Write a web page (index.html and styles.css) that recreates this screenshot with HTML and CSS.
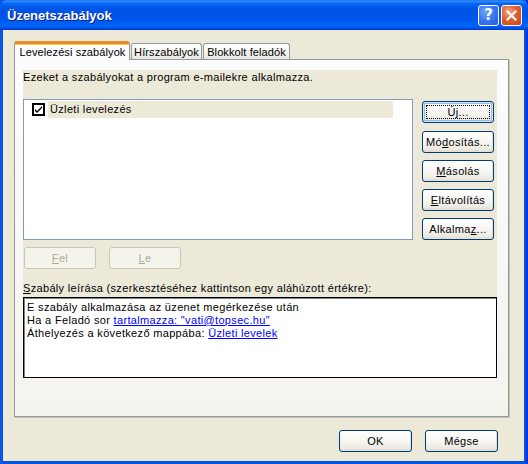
FILE: index.html
```html
<!DOCTYPE html>
<html lang="hu">
<head>
<meta charset="utf-8">
<title>Üzenetszabályok</title>
<link rel="stylesheet" href="styles.css">
</head>
<body>
<div class="window">
  <div class="titlebar">
    <span class="title">Üzenetszabályok</span>
    <div class="caption-btns">
      <span class="cbtn help">?</span>
      <span class="cbtn close"><svg width="11" height="11" viewBox="0 0 11 11"><path d="M1.5 1.5 L9.5 9.5 M9.5 1.5 L1.5 9.5" stroke="#fff" stroke-width="2.2" stroke-linecap="square"/></svg></span>
    </div>
  </div>
  <div class="client">
    <div class="tabs">
      <div class="tab active">Levelezési szabályok</div>
      <div class="tab t2">Hírszabályok</div>
      <div class="tab t3">Blokkolt feladók</div>
    </div>
    <div class="panel">
      <div class="page">
        <div class="intro">Ezeket a szabályokat a program e-mailekre alkalmazza.</div>
        <div class="rules-row">
          <div class="listbox">
            <div class="item">
              <svg class="chk" width="13" height="13" viewBox="0 0 13 13"><rect x="0.5" y="0.5" width="12" height="12" fill="#fff" stroke="#000"/><rect x="1.5" y="1.5" width="10" height="10" fill="none" stroke="#000"/><path d="M3 6 L5 8 L10 3 L10 5 L5 10 L3 8 Z" fill="#000"/></svg>
              <span class="item-label">Üzleti levelezés</span>
            </div>
          </div>
          <div class="side-btns">
            <button class="btn default">Új...</button>
            <button class="btn first">Mó<u>d</u>osítás...</button>
            <button class="btn"><u>M</u>ásolás</button>
            <button class="btn"><u>E</u>ltávolítás</button>
            <button class="btn">Alkalma<u>z</u>...</button>
          </div>
        </div>
        <div class="move-row">
          <button class="btn disabled"><u>F</u>el</button>
          <button class="btn disabled"><u>L</u>e</button>
        </div>
        <div class="desc-label"><u>S</u>zabály leírása (szerkesztéséhez kattintson egy aláhúzott értékre):</div>
        <div class="desc">
          <div>E szabály alkalmazása az üzenet megérkezése után</div>
          <div>Ha a Feladó sor <a class="link">tartalmazza: "vati@topsec.hu"</a></div>
          <div>Áthelyezés a következő mappába: <a class="link">Üzleti levelek</a></div>
        </div>
      </div>
    </div>
    <div class="footer">
      <button class="btn">OK</button>
      <button class="btn">Mégse</button>
    </div>
  </div>
</div>
</body>
</html>
```

FILE: styles.css
```css
* { box-sizing: border-box; }
html, body { margin: 0; padding: 0; background: #fff; }
body { font-family: "Liberation Sans", Arial, sans-serif; font-size: 11px; color: #000; letter-spacing: 0.33px; }

.window {
  width: 528px;
  height: 464px;
  display: flex;
  flex-direction: column;
  background: linear-gradient(to right, #0831D9 0, #166AEE 1px, #0055E5 2px, #0055E5 525px, #0831D9 527px);
}

.titlebar {
  height: 30px;
  display: flex;
  align-items: center;
  justify-content: space-between;
  padding: 0 6px 0 7px;
  background: linear-gradient(to bottom, #0A5FF5 0, #3D95FF 1px, #0A6AF7 3px, #0055E8 8px, #0052E6 14px, #0058EE 20px, #0063F8 25px, #0060F6 27px, #0043D5 29px, #0036C2 30px);
  border-radius: 7px 7px 0 0;
}
.title {
  color: #fff;
  font-weight: bold;
  font-size: 13px;
  letter-spacing: 0;
  text-shadow: 1px 1px 0 #0A1E8A;
  margin-top: 1px;
}
.caption-btns { display: flex; gap: 2px; margin-top: 1px; }
.cbtn {
  width: 21px;
  height: 21px;
  border: 1px solid #fff;
  border-radius: 3px;
  display: flex;
  align-items: center;
  justify-content: center;
  color: #fff;
  letter-spacing: 0;
}
.help {
  background: radial-gradient(circle at 35% 30%, #6FA4FF 0, #3B7BF2 45%, #2458DC 100%);
  font-family: "DejaVu Sans", sans-serif;
  font-weight: bold;
  font-size: 15px;
  line-height: 1;
}
.close {
  background: radial-gradient(circle at 35% 30%, #F0A58A 0, #E2602F 45%, #C4411A 100%);
}

.client {
  flex: 1;
  margin: 0 4px 3px 3px;
  background: #ECE9D8;
  padding: 11px 0 0 11px;
  display: flex;
  flex-direction: column;
}

.tabs {
  display: flex;
  align-items: flex-end;
  height: 18px;
  position: relative;
  z-index: 1;
}
.tab {
  height: 16px;
  border: 1px solid #919B9C;
  border-bottom: none;
  border-radius: 3px 3px 0 0;
  background: linear-gradient(#FFFFFF, #F3F3EF 60%, #E9E8E1);
  display: flex;
  align-items: center;
  justify-content: center;
  padding-top: 1px;
  white-space: nowrap;
  letter-spacing: 0.1px;
}
.tab.active {
  width: 116px;
  height: 19px;
  margin-bottom: -1px;
  background: #FCFCFE;
  border-top: 3px solid #E68B2C;
  box-shadow: inset 0 1px 0 #FFC73C;
  padding-top: 0;
  padding-left: 1px;
}
.t2 { width: 71px; margin-left: 1px; }
.t3 { width: 87px; margin-left: 1px; }

.panel {
  width: 495px;
  height: 358px;
  border: 1px solid #919B9C;
  box-shadow: 1px 1px 0 #C4C2B4;
  background: linear-gradient(#FCFCFE, #F4F3EE);
  padding: 10px 0 0 8px;
}

.page {
  width: 474px;
  height: 308px;
  background: #ECE9D8;
  display: flex;
  flex-direction: column;
}
.intro { height: 14px; line-height: 14px; }

.rules-row {
  display: flex;
  margin-top: 15px;
  gap: 9px;
}
.listbox {
  width: 390px;
  height: 141px;
  border: 1px solid #7F9DB9;
  background: #fff;
  padding: 1px 0 0 8px;
}
.item { display: flex; align-items: center; height: 17px; }
.chk { display: block; flex: none; }
.item-label {
  margin-left: 3px;
  width: 345px;
  height: 17px;
  line-height: 17px;
  padding-left: 2px;
  background: #ECE9D8;
}

.side-btns {
  display: flex;
  flex-direction: column;
  gap: 7px;
  padding-top: 2px;
}
.side-btns .first { margin-top: 1px; }

.btn {
  font-family: "Liberation Sans", Arial, sans-serif;
  font-size: 11px;
  letter-spacing: 0.33px;
  color: #000;
  width: 72px;
  height: 22px;
  padding: 0;
  border: 1px solid #003C74;
  border-radius: 3px;
  background: linear-gradient(#FFFFFF, #F5F4EF 60%, #EAE8DF 88%, #D8D3C6);
  box-shadow: inset -1px -1px 0 #E3E1D6;
  position: relative;
  white-space: nowrap;
}
.btn.default {
  box-shadow: inset 0 0 0 1px #CEE7FF, inset 0 0 0 2px #98B8EA;
}
.btn.default::after {
  content: "";
  position: absolute;
  left: 3px; top: 3px; right: 3px; bottom: 3px;
  border: 1px dotted #000;
}
.btn.disabled {
  color: #ACA899;
  border-color: #C9C7BA;
  background: #F5F4EA;
  box-shadow: none;
}

.move-row {
  display: flex;
  gap: 13px;
  margin-top: 7px;
  padding-left: 1px;
}

.desc-label {
  margin-top: 12px;
  height: 14px;
  line-height: 14px;
}
.desc {
  margin-top: 2px;
  width: 474px;
  height: 81px;
  background: #fff;
  border: 1px solid #000;
  box-shadow: inset 1px 1px 0 #808080;
  padding: 3px 3px;
  line-height: 13px;
}
.link { color: #0000FF; text-decoration: underline; }

.footer {
  width: 495px;
  display: flex;
  justify-content: flex-end;
  gap: 13px;
  margin-top: 13px;
  padding-right: 11px;
}
.footer .btn { width: 73px; }
```
